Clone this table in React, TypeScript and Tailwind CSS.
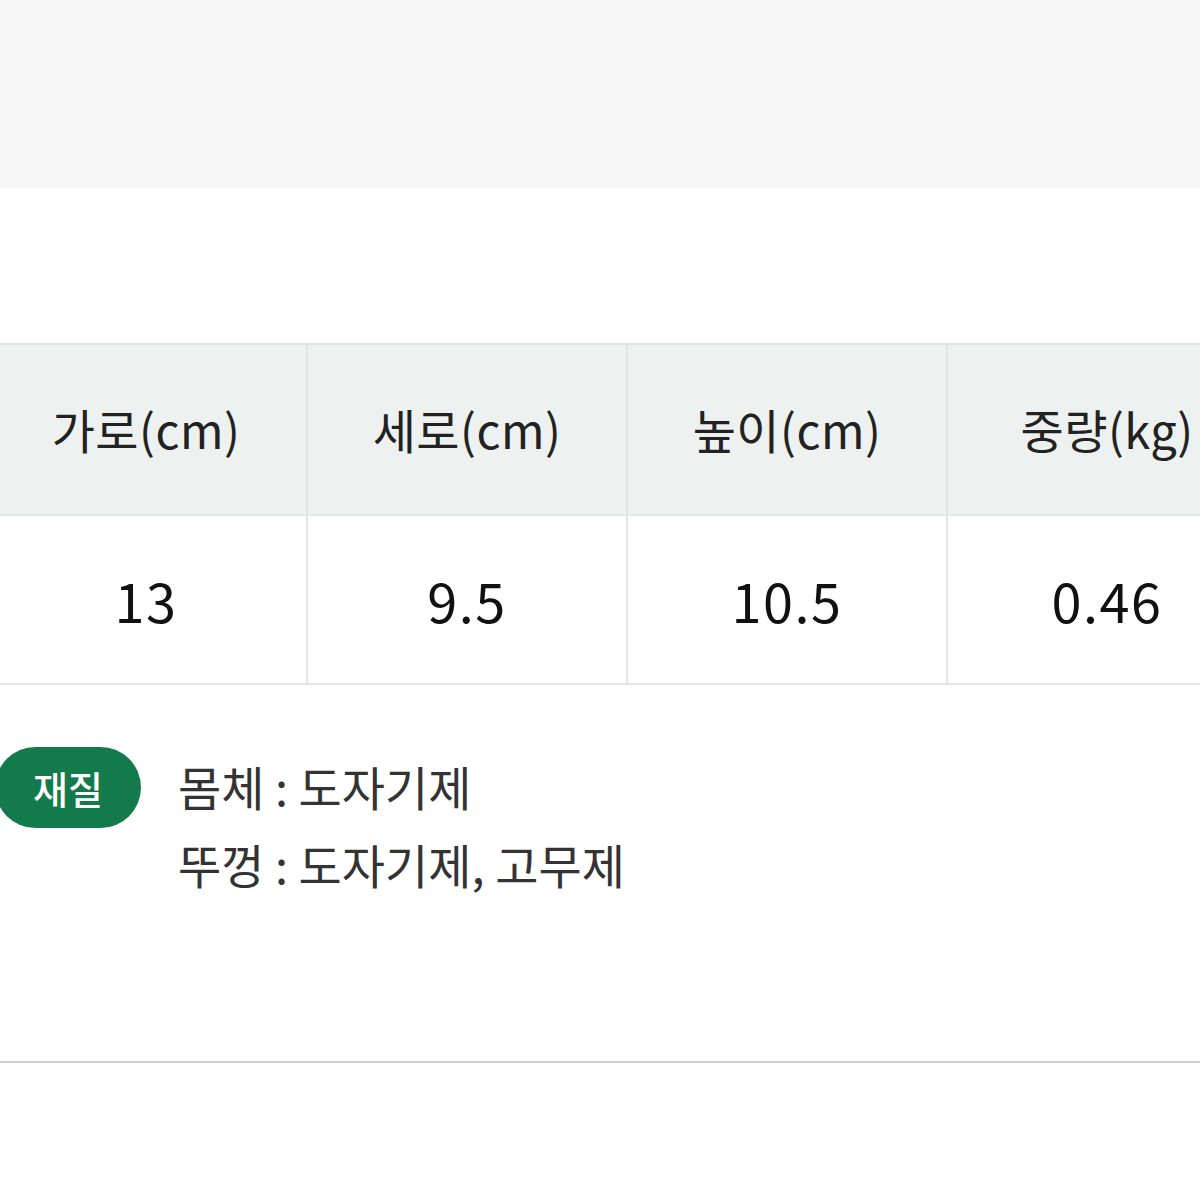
const font = { fontFamily: '"Noto Sans CJK KR", "Noto Sans", sans-serif' };

const cols = [
  { label: "가로(cm)", value: "13" },
  { label: "세로(cm)", value: "9.5" },
  { label: "높이(cm)", value: "10.5" },
  { label: "중량(kg)", value: "0.46" },
];

export default function App() {
  return (
    <div className="w-[1200px] h-[1200px] bg-white overflow-hidden text-[#222]" style={font}>
      <div className="h-[188px] bg-[#f7f7f7] border-b border-[#f2f2f2]" />

      <div className="pt-[155px]">
        <div className="flex w-[1280px] -ml-[14px] border-t-2 border-[#dfe3e2]">
          {cols.map((c, i) => (
            <div
              key={c.label}
              className={
                "w-[320px] flex flex-col " +
                (i > 0 ? "border-l-2 border-[#e3e6e5]" : "")
              }
            >
              <div className="h-[169px] bg-[#edf2f1] flex items-center justify-center text-[47px] tracking-[0.5px]">
                {c.label}
              </div>
              <div className="h-[171px] border-t-2 border-b-2 border-[#e3e6e5] flex items-center justify-center text-[54px] tracking-[1.5px] text-[#111]">
                {c.value}
              </div>
            </div>
          ))}
        </div>

        <div className="flex items-start mt-[62px]">
          <div className="-ml-[5px] w-[146px] h-[81px] rounded-full bg-[#137a4b] text-white text-[38px] font-medium flex items-center justify-center">
            재질
          </div>
          <div className="ml-[37px] text-[47px] leading-[78px] text-[#333]">
            <div>몸체 : 도자기제</div>
            <div>뚜껑 : 도자기제, 고무제</div>
          </div>
        </div>

        <div className="mt-[158px] border-t-2 border-[#cfcfcf]" />
      </div>
    </div>
  );
}
